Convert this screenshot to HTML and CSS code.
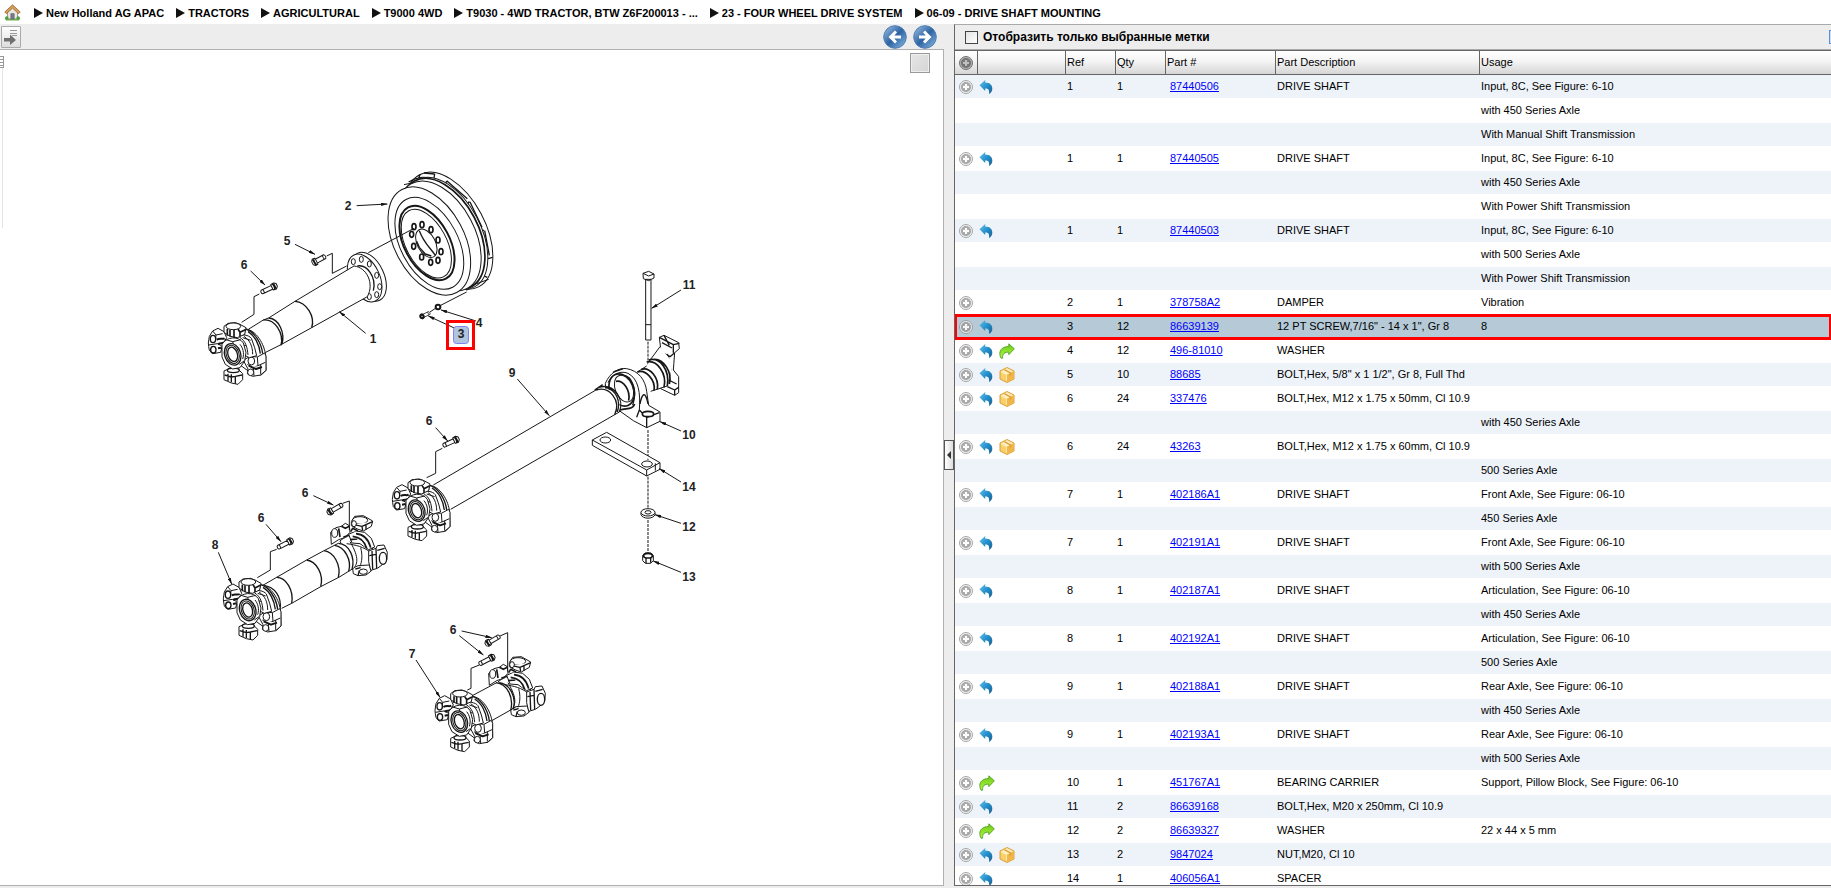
FILE: index.html
```html
<!DOCTYPE html>
<html lang="ru">
<head>
<meta charset="utf-8">
<title>06-09 - DRIVE SHAFT MOUNTING</title>
<link rel="stylesheet" href="styles.css">
</head>
<body>
<svg class="sprite" aria-hidden="true">
  <defs>
    <radialGradient id="g-plus" cx=".5" cy=".45" r=".6"><stop offset="0" stop-color="#b4b4b4"/><stop offset="1" stop-color="#8c8c8c"/></radialGradient>
    <linearGradient id="g-blue" x1="0" y1="0" x2="1" y2="1"><stop offset="0" stop-color="#63c3ec"/><stop offset=".5" stop-color="#2590cb"/><stop offset="1" stop-color="#1a5f97"/></linearGradient>
    <linearGradient id="g-green" x1="0" y1="0" x2="0" y2="1"><stop offset="0" stop-color="#6cc81e"/><stop offset=".5" stop-color="#8fe02c"/><stop offset="1" stop-color="#b6f060"/></linearGradient>
    <linearGradient id="g-ball" x1="0" y1="0" x2="1" y2="1"><stop offset="0" stop-color="#a5c5e5"/><stop offset=".5" stop-color="#2e64a4"/><stop offset="1" stop-color="#8fbde4"/></linearGradient>
    <symbol id="i-plus" viewBox="0 0 14 14"><circle cx="7" cy="7" r="6.5" fill="#f0f0f0" stroke="#999"/><circle cx="7" cy="7" r="5" fill="url(#g-plus)"/><path d="M7 4v6M4 7h6" stroke="#fff" stroke-width="2"/></symbol>
    <symbol id="i-back" viewBox="0 0 14 14"><path d="M0.500 5.200 6.200 0v2.600c4.800 0 7.400 2.800 7.100 6.600-.1 1.800-1 3.200-3.300 4.800.6-3.600-.4-5.400-3.800-5.400v2.400Z" fill="url(#g-blue)"/></symbol>
    <symbol id="i-fwd" viewBox="0 0 16 16"><path d="M15.300 5.800 9.800.8v2.700C4 3.500.8 6.500.8 10.500c0 1.600.3 3 1.200 4.700h1.600c-.3-4.400 2-6.200 6.200-6v2.500Z" fill="url(#g-green)" stroke="#3f9a10" stroke-width=".8"/></symbol>
    <symbol id="i-box" viewBox="0 0 16 16"><path d="m8 .5 7 3.500v8l-7 3.500L1 12V4Z" fill="#f8cf6a" stroke="#d8962a" stroke-width=".9"/><path d="m8 1.300 6.200 3.100L8 7.700 1.800 4.400Z" fill="#fdf0c4"/><path d="M8 7.700 14.200 4.400v7.200L8 14.700Z" fill="#f0b64a"/><path d="m4.500 3 6.200 3.200v2.700l1.600-1V5.400L6 2.200Z" fill="#e0a035"/><path d="M2.200 5.300 7.500 8v5.800" fill="none" stroke="#fff0b8" stroke-width=".7"/></symbol>
  </defs>
</svg>

<nav class="crumbs" aria-label="Breadcrumb">
  <a class="home" href="#" aria-label="Home"><svg width="17" height="17" viewBox="0 0 17 17"><path d="M1 14.500h15l-1 2H2Z" fill="#66b84d"/><path d="M3.500 7.500 8.500 3l5 4.500V15h-10Z" fill="#e9e6e0" stroke="#8a8478" stroke-width=".8"/><path d="M8.500.8.800 8l1.600 1.700 6.100-5.600 6.100 5.600L16.200 8Z" fill="#d9a05a" stroke="#93612c" stroke-width=".8"/><path d="M6.800 15V9.600h3.400V15Z" fill="#777c88" stroke="#555" stroke-width=".5"/><circle cx="2.800" cy="14" r="1.800" fill="#4da03c"/><circle cx="14.200" cy="14" r="1.800" fill="#4da03c"/></svg></a>
  <ol>
    <li><a href="#">New Holland AG APAC</a></li>
    <li><a href="#">TRACTORS</a></li>
    <li><a href="#">AGRICULTURAL</a></li>
    <li><a href="#">T9000 4WD</a></li>
    <li><a href="#">T9030 - 4WD TRACTOR, BTW Z6F200013 - ...</a></li>
    <li><a href="#">23 - FOUR WHEEL DRIVE SYSTEM</a></li>
    <li><a href="#">06-09 - DRIVE SHAFT MOUNTING</a></li>
  </ol>
</nav>

<main class="workspace">
  <section class="figure-pane">
    <div class="toolbar">
      <button class="page-btn" aria-label="Open list"><svg width="18" height="20" viewBox="0 0 18 20"><path d="M8 3.500h7M8 6.500h7M10 8.500h5" stroke="#999"/><path d="M2 11h6V7.500l6 5.500-6 5v-3.500H2Z" fill="#707070"/></svg></button>
      <div class="pager">
        <button aria-label="Previous"><svg width="24" height="24" viewBox="0 0 24 24"><circle cx="12" cy="12" r="11.300" fill="url(#g-ball)" stroke="#4f7fb5"/><path d="M5.500 12 12 5.500l2 2L11.300 10.500H18v3h-6.700L14 16.500l-2 2Z" fill="#fff"/></svg></button>
        <button aria-label="Next"><svg width="24" height="24" viewBox="0 0 24 24"><circle cx="12" cy="12" r="11.300" fill="url(#g-ball)" stroke="#4f7fb5"/><path d="M18.500 12 12 5.500l-2 2 2.700 3H6v3h6.700L10 16.500l2 2Z" fill="#fff"/></svg></button>
      </div>
    </div>
    <div class="canvas">
      <button class="thumb-btn" aria-label="Thumbnail"></button>
      <button class="side-tab" aria-label="Panel"></button>
      <svg class="drawing" width="942" height="835" viewBox="0 50 942 835" role="img" aria-label="Drive shaft mounting">
        <defs>
          <marker id="tip" viewBox="0 0 16 8" refX="15" refY="4" markerWidth="20" markerHeight="10" orient="auto" markerUnits="userSpaceOnUse"><path d="M0 0 16 4 0 8Z" fill="#111" stroke="none"/></marker>
          <g id="bolt"><path d="M0-6h34V6H0C-4 4-4-4 0-6Z"/><path d="M6-6v12M33-9l10-1 6 5v9l-6 6-10-1Z"/><path d="M37-10c4 5 4 15 0 20M42-9l1 18" stroke-width="4"/></g>
          <g id="yoke">
            <path d="M38-76C70-74 96-30 99 5L100 48 86 62 60 60 20 30Z"/>
            <path d="M38-76C64-70 86-36 90-2M46-68C66-56 80-30 83-2" stroke-width="4"/>
            <path d="M32 18 52 6 74 8 96-4 100 5V48L84 62 60 66 44 58 46 44Z"/>
            <path d="M74 8 76 34 60 40 44 30M76 34 98 24M62 40 64 64M84 30V60"/>
            <ellipse cx="56" cy="20" rx="10" ry="12"/><ellipse cx="54" cy="54" rx="9" ry="10"/><path d="M48 34 70 44 88 38" stroke-width="6"/>
            <path d="M5-55C30-62 48-58 56-48L66-20 72 4 50 10 30 0Z"/>
            <path d="M20-52C40-40 44-20 46 2M34-54C52-42 60-24 60 0M18-30 40-26M30-50 54-42"/>
            <path d="M-60-70-44-78-26-68-18-50-30-30-36-6-60-2-70-12-72-24-73-34-70-54Z"/>
            <path d="M-60-70-50-58-30-62M-50-58-52-40M-72-28-46-32-34-26"/>
            <ellipse cx="-59" cy="-46" rx="8" ry="11" stroke-width="4"/><ellipse cx="-58" cy="-14" rx="8" ry="10" stroke-width="4"/><path d="M-48-44C-38-50-30-44-24-48M-44-30C-36-36-32-30-26-36M-44-18-34-20" stroke-width="6"/>
            <path d="M-26-84-14-93 8-95 22-90 40-80 36-60 14-50-8-54-26-66Z"/>
            <ellipse cx="2" cy="-84" rx="22" ry="10"/><path d="M-16-76V-56M-8-74V-54M4-74V-50M16-76 22-66 38-74M22-66V-54" stroke-width="5"/>
            <path d="M-26 50-8 42 16 44 30 58V76L16 90-4 86-26 76Z"/>
            <ellipse cx="2" cy="48" rx="18" ry="7" stroke-width="4"/><path d="M-14 58V80M-4 60V84M8 66V88M8 66 28 62M-24 62-4 68 8 66" stroke-width="4"/>
            <path d="M-32-30C-18-54 18-56 32-34L40-6 36 20 22 40 0 44-22 30-32 8Z"/>
            <path d="M-20-44 0-38 24-44M22-30C30-20 36-4 30 14M0-38 2-30M20 30 34 20"/>
            <ellipse rx="24" ry="33" transform="rotate(-18)" stroke-width="4"/><ellipse rx="19" ry="28" transform="rotate(-18)"/><ellipse rx="14" ry="22" transform="rotate(-18)" stroke-width="4"/>
          </g>
          <g id="yoke-back">
            <path d="M30 78C60 50 100 60 128 96L120 160 104 178 84 172 60 152Z"/>
            <path d="M70 176 84 182 108 180 124 168 118 150 84 152 68 160Z"/><ellipse cx="100" cy="170" rx="12" ry="8"/><path d="M76 162 92 158M84 182 88 166" stroke-width="4"/>
            <path d="M4 88 2 52 18 38 34 34 46 25 58 32 60 52 44 68 26 74Z"/>
            <ellipse cx="14" cy="54" rx="9" ry="13"/><path d="M26 40 30 66M34 34 46 40 58 34M40 66 62 60 80 66" stroke-width="5"/>
            <path d="M56 58 78 48 104 52 124 70 134 96 116 104 90 86 66 84Z"/>
            <path d="M68 64C90 66 104 80 110 100M78 56C100 58 116 74 122 98M60 74 82 72M62 50 68 40 84 48" stroke-width="5"/>
            <path d="M50 86C80 90 100 96 122 112M60 80C90 130 82 150 68 162M92 98C98 120 96 140 90 154"/>
            <path d="M64 20 74 4 100 2 128 18 124 34 100 48 82 42 64 32Z"/>
            <ellipse cx="90" cy="16" rx="23" ry="11"/><path d="M68 28 96 34 128 20M96 34 98 46M108 30V44" stroke-width="4"/><ellipse cx="72" cy="26" rx="7" ry="9"/>
            <path d="M116 108 138 100 142 92 162 90 172 112 170 136 156 150 142 160 122 166 116 140Z"/>
            <ellipse cx="159" cy="130" rx="11" ry="18" stroke-width="4"/><path d="M138 100 140 160M126 108 128 162M142 106 164 100M118 122 138 118" stroke-width="4"/>
          </g>
        </defs>

        <!-- Front shaft with damper -->
        <g class="ink" transform="translate(200 160) scale(.33333)">
          <ellipse cx="748" cy="212" rx="108" ry="190" transform="rotate(-28 748 212)"/>
          <path d="M672 39 704 42M704 42 702 54M740 64 734 74M740 62 802 116M808 124 802 134M810 126 846 202M852 210 842 216M854 212 868 286M878 292 864 296M862 352 848 346M626 66C650 50 670 50 700 56M660 44 656 54" stroke-width="4"/>
          <ellipse cx="738" cy="220" rx="104" ry="182" transform="rotate(-28 738 220)"/>
          <ellipse cx="728" cy="222" rx="107" ry="180" transform="rotate(-28 728 222)" stroke-width="5"/>
          <ellipse cx="718" cy="228" rx="106" ry="178" transform="rotate(-28 718 228)"/>
          <ellipse cx="688" cy="243" rx="105" ry="175" transform="rotate(-28 688 243)"/>
          <path d="M612 74 640 68M800 392 816 376 866 358"/>
          <ellipse cx="688" cy="250" rx="86" ry="149" transform="rotate(-28 688 250)"/>
          <ellipse cx="681" cy="249" rx="68" ry="121" transform="rotate(-28 681 249)" stroke-width="6"/>
          <ellipse cx="679" cy="251" rx="61" ry="112" transform="rotate(-28 679 251)"/>
          <ellipse cx="679" cy="250" rx="27" ry="46" transform="rotate(-28 679 250)"/>
          <path d="M658 212C672 250 690 262 706 286M650 244 658 262 676 282 694 288" stroke-width="4"/>
          <g stroke-width="5"><ellipse cx="642" cy="200" rx="6" ry="9"/><ellipse cx="666" cy="194" rx="6" ry="9"/><ellipse cx="693" cy="209" rx="6" ry="9"/><ellipse cx="714" cy="240" rx="6" ry="9"/><ellipse cx="723" cy="275" rx="6" ry="9"/><ellipse cx="714" cy="301" rx="6" ry="9"/><ellipse cx="692" cy="307" rx="6" ry="9"/><ellipse cx="665" cy="291" rx="6" ry="9"/><ellipse cx="641" cy="259" rx="6" ry="9"/><ellipse cx="635" cy="223" rx="6" ry="9"/></g>
          <path d="M642 205 505 278M800 396 722 436M705 446 690 456"/>
          <ellipse cx="506" cy="350" rx="46" ry="78" transform="rotate(-25 506 350)"/>
          <ellipse cx="494" cy="354" rx="45" ry="76" transform="rotate(-25 494 354)"/>
          <g><ellipse cx="460" cy="305" rx="6" ry="9"/><ellipse cx="484" cy="298" rx="6" ry="9"/><ellipse cx="508" cy="312" rx="6" ry="9"/><ellipse cx="530" cy="346" rx="6" ry="9"/><ellipse cx="539" cy="380" rx="6" ry="9"/><ellipse cx="530" cy="404" rx="6" ry="9"/><ellipse cx="508" cy="410" rx="6" ry="9"/></g>
          <path d="M472 318C500 312 530 350 520 392" stroke-width="4"/>
          <path class="clear" d="M145 510 462 318C500 322 524 370 502 410L195 578Z"/>
          <path d="M145 508 190 480 206 474 285 424 462 318C500 322 524 370 502 410L335 503 243 554 195 578"/>
          <path d="M190 480C225 476 252 520 243 556M206 474C238 476 255 520 246 552M285 424C320 426 346 470 335 503" stroke-width="4"/>
          <use href="#yoke" x="98" y="583"/>
          <path d="M178 402 162 410V463L125 487M380 288 397 280V340L440 318"/>
          <use href="#bolt" transform="translate(186 396) rotate(-25)"/>
          <use href="#bolt" transform="translate(374 290) rotate(152) scale(.85 1.1)"/>
          <use href="#bolt" transform="translate(688 459) rotate(155) scale(.6 .8)"/>
          <circle cx="666" cy="469" r="5" stroke-width="6"/>
          <circle cx="714" cy="441" r="7" stroke-width="6"/>
          <g marker-end="url(#tip)"><path d="M470 137 562 132"/><path d="M285 253 345 283"/><path d="M152 333 195 375"/><path d="M497 520 418 455"/><path d="M828 483 723 450"/><path d="M765 505 685 468"/></g>
        </g>

        <!-- Long shaft with bearing carrier -->
        <g class="ink" transform="translate(380 380) scale(.33333)">
          <path d="M804-115V-30M804 150V240M804 290V385M804 420V520" stroke-dasharray="9 3"/>
          <path d="M838-128 852-134 896-112 898-94 884-82 880-30 896-10V38L884 46 842 26 860-20 846-60Z"/>
          <path d="M838-128 880-106 898-110M880-106V-82M846-112 876-96M852-134 868-104M862-78 874-40 866-2M852-80 870-70 884-82M862 20 884 30 896 22M884 30V46M846 14 866 0 890 12" stroke-width="4"/>
          <path class="clear" d="M772-24 800-42 812-60 840-100 880-50 862 16 820 34 800 30Z"/>
          <path d="M772-24 800-42M806-54 840-100M812 34 862 18"/>
          <path d="M806-60C840-70 870-30 862 18M800-54C830-62 862-20 852 22M822-62C850-64 878-24 868 12M772-24C796-34 828 0 822 32M784-32C810-40 838-6 832 28" stroke-width="5"/>
          <path d="M676 10C690-22 716-38 740-34 776-28 796 0 800 34L806 76 840 96V124L800 143 760 122 718 92C690 70 676 40 676 10Z"/>
          <path d="M684 8C694-16 720-30 744-20 776-4 782 40 778 90"/>
          <path d="M690 6C700-12 730-22 748-6 768 20 766 50 758 76M730-34 700-24M778 90 770 112M778 90 800 112 838 98M800 112V143M780 72C786 40 796 30 804 72" stroke-width="4"/>
          <ellipse cx="725" cy="30" rx="36" ry="50" transform="rotate(-22 725 30)" stroke-width="5"/>
          <ellipse cx="732" cy="26" rx="26" ry="42" transform="rotate(-22 732 26)"/>
          <path d="M708 4C730 0 752 30 746 62M720 90C740 84 758 90 764 72" stroke-width="5"/>
          <ellipse cx="804" cy="102" rx="17" ry="8" stroke-width="5"/>
          <path class="clear" d="M160 315 648 30C700 10 726 60 718 98L212 388Z"/>
          <path d="M160 315 648 30M718 96 212 388"/>
          <path d="M648 30C688 18 724 60 704 104M656 22C704 8 734 60 718 96M644 30 668 14M676 22C712 30 722 66 712 96" stroke-width="4"/>
          <use href="#yoke" x="110" y="392"/>
          <path d="M187 205 167 215V280L140 293"/>
          <use href="#bolt" transform="translate(192 196) rotate(-25)"/>
          <path d="M797-302H813V-120H797ZM789-320 806-326 822-318V-306L806-298 790-304ZM789-320 806-312 822-318M797-166H813"/>
          <path d="M637 180 680 157 840 248V268L800 288 637 196ZM637 180 800 270 840 248M800 270V288M826 250V272"/>
          <ellipse cx="676" cy="180" rx="16" ry="9"/><ellipse cx="801" cy="252" rx="16" ry="9"/>
          <path d="M783 398V404C788 418 820 418 825 404V398"/><ellipse cx="804" cy="397" rx="21" ry="11"/><ellipse cx="804" cy="397" rx="9" ry="5"/>
          <path d="M788 526 796 519 812 519 820 526V542L812 550 796 550 788 542Z"/><ellipse cx="804" cy="527" rx="13" ry="7" stroke-width="5"/><path d="M798 534V550M812 534V548" stroke-width="4"/>
          <g marker-end="url(#tip)"><path d="M903-270 815-215"/><path d="M412-3 508 107"/><path d="M903 153 840 125"/><path d="M903 306 838 266"/><path d="M903 430 825 404"/><path d="M903 577 820 543"/><path d="M167 143 203 183"/></g>
        </g>

        <!-- Articulation shaft -->
        <g class="ink" transform="translate(200 480) scale(.33333)">
          <use href="#yoke-back" x="390" y="105"/>
          <path class="clear" d="M185 318 415 190C450 190 468 230 460 265L245 388Z"/>
          <path d="M185 318 230 292 320 240 372 212 415 190M460 265 420 290 362 320 275 370 245 385"/>
          <path d="M230 292C258 292 282 330 275 370M320 240C350 244 372 284 362 320M372 212C402 216 424 256 415 292M415 190C448 192 466 232 456 268M404 196C434 200 456 240 446 274M190 316C224 320 246 350 240 388" stroke-width="4"/>
          <use href="#yoke" x="143" y="390"/>
          <path d="M230 208 211 215V270L172 293M428 70 448 63V150"/>
          <use href="#bolt" transform="translate(235 202) rotate(-27)"/>
          <use href="#bolt" transform="translate(425 75) rotate(150)"/>
          <g marker-end="url(#tip)"><path d="M340 47 400 75"/><path d="M198 133 243 185"/><path d="M55 217 95 312"/></g>
        </g>

        <!-- Short shaft -->
        <g class="ink" transform="translate(390 610) scale(.33333)">
          <use href="#yoke-back" x="294" y="138"/>
          <path class="clear" d="M245 258 320 216C356 220 376 260 366 300L300 335Z"/>
          <path d="M245 258 320 218M300 335 376 292"/>
          <path d="M318 218C352 222 372 262 362 302M328 218C360 222 380 262 370 296" stroke-width="4"/>
          <use href="#yoke" x="208" y="335"/>
          <path d="M268 165 243 175V235L232 240M330 78 353 68V185"/>
          <use href="#bolt" transform="translate(270 161) rotate(-27)"/>
          <use href="#bolt" transform="translate(327 80) rotate(150) scale(.95 1)"/>
          <g marker-end="url(#tip)"><path d="M215 63 305 83"/><path d="M208 77 280 135"/><path d="M78 150 150 262"/></g>
        </g>

        <rect class="hot" x="453.500" y="326.500" width="15" height="17" rx="3"/>
        <g class="callouts">
          <text x="348" y="210">2</text><text x="287" y="245">5</text><text x="244" y="269">6</text><text x="373" y="343">1</text><text x="479" y="327">4</text><text x="461" y="338">3</text>
          <text x="689" y="289">11</text><text x="512" y="377">9</text><text x="429" y="425">6</text><text x="689" y="439">10</text><text x="689" y="491">14</text><text x="689" y="531">12</text><text x="689" y="581">13</text>
          <text x="305" y="497">6</text><text x="261" y="522">6</text><text x="215" y="549">8</text><text x="453" y="634">6</text><text x="412" y="658">7</text>
        </g>
        <rect class="mark" x="447.500" y="321.500" width="26" height="27"/>
      </svg>
    </div>
  </section>

  <div class="splitter"><button aria-label="Collapse"><svg width="4" height="8" viewBox="0 0 4 8"><path d="M4 0v8L0 4Z" fill="#333"/></svg></button></div>

  <section class="parts-pane">
    <div class="filter">
      <label><input type="checkbox">Отобразить только выбранные метки</label>
      <button class="edge-btn" aria-label="Options"></button>
    </div>
    <div class="grid-wrap">
      <table>
        <colgroup><col class="c-add"><col class="c-icons"><col class="c-ref"><col class="c-qty"><col class="c-part"><col class="c-desc"><col></colgroup>
        <thead><tr><th><button aria-label="Add all"><svg class="plus dark"><use href="#i-plus"/></svg></button></th><th></th><th>Ref</th><th>Qty</th><th>Part #</th><th>Part Description</th><th>Usage</th></tr></thead>
        <tbody>
          <tr><td><button aria-label="Add"><svg class="plus"><use href="#i-plus"/></svg></button></td><td><svg class="back"><use href="#i-back"/></svg></td><td>1</td><td>1</td><td><a href="#">87440506</a></td><td>DRIVE SHAFT</td><td>Input, 8C, See Figure: 6-10</td></tr>
          <tr><td></td><td></td><td></td><td></td><td></td><td></td><td>with 450 Series Axle</td></tr>
          <tr><td></td><td></td><td></td><td></td><td></td><td></td><td>With Manual Shift Transmission</td></tr>
          <tr><td><button aria-label="Add"><svg class="plus"><use href="#i-plus"/></svg></button></td><td><svg class="back"><use href="#i-back"/></svg></td><td>1</td><td>1</td><td><a href="#">87440505</a></td><td>DRIVE SHAFT</td><td>Input, 8C, See Figure: 6-10</td></tr>
          <tr><td></td><td></td><td></td><td></td><td></td><td></td><td>with 450 Series Axle</td></tr>
          <tr><td></td><td></td><td></td><td></td><td></td><td></td><td>With Power Shift Transmission</td></tr>
          <tr><td><button aria-label="Add"><svg class="plus"><use href="#i-plus"/></svg></button></td><td><svg class="back"><use href="#i-back"/></svg></td><td>1</td><td>1</td><td><a href="#">87440503</a></td><td>DRIVE SHAFT</td><td>Input, 8C, See Figure: 6-10</td></tr>
          <tr><td></td><td></td><td></td><td></td><td></td><td></td><td>with 500 Series Axle</td></tr>
          <tr><td></td><td></td><td></td><td></td><td></td><td></td><td>With Power Shift Transmission</td></tr>
          <tr><td><button aria-label="Add"><svg class="plus"><use href="#i-plus"/></svg></button></td><td></td><td>2</td><td>1</td><td><a href="#">378758A2</a></td><td>DAMPER</td><td>Vibration</td></tr>
          <tr class="selected"><td><button aria-label="Add"><svg class="plus"><use href="#i-plus"/></svg></button></td><td><svg class="back"><use href="#i-back"/></svg></td><td>3</td><td>12</td><td><a href="#">86639139</a></td><td>12 PT SCREW,7/16" - 14 x 1", Gr 8</td><td>8</td></tr>
          <tr><td><button aria-label="Add"><svg class="plus"><use href="#i-plus"/></svg></button></td><td><svg class="back"><use href="#i-back"/></svg><svg class="fwd"><use href="#i-fwd"/></svg></td><td>4</td><td>12</td><td><a href="#">496-81010</a></td><td>WASHER</td><td></td></tr>
          <tr><td><button aria-label="Add"><svg class="plus"><use href="#i-plus"/></svg></button></td><td><svg class="back"><use href="#i-back"/></svg><svg class="box"><use href="#i-box"/></svg></td><td>5</td><td>10</td><td><a href="#">88685</a></td><td>BOLT,Hex, 5/8" x 1 1/2", Gr 8, Full Thd</td><td></td></tr>
          <tr><td><button aria-label="Add"><svg class="plus"><use href="#i-plus"/></svg></button></td><td><svg class="back"><use href="#i-back"/></svg><svg class="box"><use href="#i-box"/></svg></td><td>6</td><td>24</td><td><a href="#">337476</a></td><td>BOLT,Hex, M12 x 1.75 x 50mm, Cl 10.9</td><td></td></tr>
          <tr><td></td><td></td><td></td><td></td><td></td><td></td><td>with 450 Series Axle</td></tr>
          <tr><td><button aria-label="Add"><svg class="plus"><use href="#i-plus"/></svg></button></td><td><svg class="back"><use href="#i-back"/></svg><svg class="box"><use href="#i-box"/></svg></td><td>6</td><td>24</td><td><a href="#">43263</a></td><td>BOLT,Hex, M12 x 1.75 x 60mm, Cl 10.9</td><td></td></tr>
          <tr><td></td><td></td><td></td><td></td><td></td><td></td><td>500 Series Axle</td></tr>
          <tr><td><button aria-label="Add"><svg class="plus"><use href="#i-plus"/></svg></button></td><td><svg class="back"><use href="#i-back"/></svg></td><td>7</td><td>1</td><td><a href="#">402186A1</a></td><td>DRIVE SHAFT</td><td>Front Axle, See Figure: 06-10</td></tr>
          <tr><td></td><td></td><td></td><td></td><td></td><td></td><td>450 Series Axle</td></tr>
          <tr><td><button aria-label="Add"><svg class="plus"><use href="#i-plus"/></svg></button></td><td><svg class="back"><use href="#i-back"/></svg></td><td>7</td><td>1</td><td><a href="#">402191A1</a></td><td>DRIVE SHAFT</td><td>Front Axle, See Figure: 06-10</td></tr>
          <tr><td></td><td></td><td></td><td></td><td></td><td></td><td>with 500 Series Axle</td></tr>
          <tr><td><button aria-label="Add"><svg class="plus"><use href="#i-plus"/></svg></button></td><td><svg class="back"><use href="#i-back"/></svg></td><td>8</td><td>1</td><td><a href="#">402187A1</a></td><td>DRIVE SHAFT</td><td>Articulation, See Figure: 06-10</td></tr>
          <tr><td></td><td></td><td></td><td></td><td></td><td></td><td>with 450 Series Axle</td></tr>
          <tr><td><button aria-label="Add"><svg class="plus"><use href="#i-plus"/></svg></button></td><td><svg class="back"><use href="#i-back"/></svg></td><td>8</td><td>1</td><td><a href="#">402192A1</a></td><td>DRIVE SHAFT</td><td>Articulation, See Figure: 06-10</td></tr>
          <tr><td></td><td></td><td></td><td></td><td></td><td></td><td>500 Series Axle</td></tr>
          <tr><td><button aria-label="Add"><svg class="plus"><use href="#i-plus"/></svg></button></td><td><svg class="back"><use href="#i-back"/></svg></td><td>9</td><td>1</td><td><a href="#">402188A1</a></td><td>DRIVE SHAFT</td><td>Rear Axle, See Figure: 06-10</td></tr>
          <tr><td></td><td></td><td></td><td></td><td></td><td></td><td>with 450 Series Axle</td></tr>
          <tr><td><button aria-label="Add"><svg class="plus"><use href="#i-plus"/></svg></button></td><td><svg class="back"><use href="#i-back"/></svg></td><td>9</td><td>1</td><td><a href="#">402193A1</a></td><td>DRIVE SHAFT</td><td>Rear Axle, See Figure: 06-10</td></tr>
          <tr><td></td><td></td><td></td><td></td><td></td><td></td><td>with 500 Series Axle</td></tr>
          <tr><td><button aria-label="Add"><svg class="plus"><use href="#i-plus"/></svg></button></td><td><svg class="fwd"><use href="#i-fwd"/></svg></td><td>10</td><td>1</td><td><a href="#">451767A1</a></td><td>BEARING CARRIER</td><td>Support, Pillow Block, See Figure: 06-10</td></tr>
          <tr><td><button aria-label="Add"><svg class="plus"><use href="#i-plus"/></svg></button></td><td><svg class="back"><use href="#i-back"/></svg></td><td>11</td><td>2</td><td><a href="#">86639168</a></td><td>BOLT,Hex, M20 x 250mm, Cl 10.9</td><td></td></tr>
          <tr><td><button aria-label="Add"><svg class="plus"><use href="#i-plus"/></svg></button></td><td><svg class="fwd"><use href="#i-fwd"/></svg></td><td>12</td><td>2</td><td><a href="#">86639327</a></td><td>WASHER</td><td>22 x 44 x 5 mm</td></tr>
          <tr><td><button aria-label="Add"><svg class="plus"><use href="#i-plus"/></svg></button></td><td><svg class="back"><use href="#i-back"/></svg><svg class="box"><use href="#i-box"/></svg></td><td>13</td><td>2</td><td><a href="#">9847024</a></td><td>NUT,M20, Cl 10</td><td></td></tr>
          <tr><td><button aria-label="Add"><svg class="plus"><use href="#i-plus"/></svg></button></td><td><svg class="back"><use href="#i-back"/></svg></td><td>14</td><td>1</td><td><a href="#">406056A1</a></td><td>SPACER</td><td></td></tr>
        </tbody>
      </table>
    </div>
  </section>
</main>
</body>
</html>
```

FILE: styles.css
```css
* { box-sizing: border-box; }

body {
  margin: 0;
  height: 100vh;
  display: flex;
  flex-direction: column;
  overflow: hidden;
  background: #ededed;
  color: #000;
  font: 11px/16px "Liberation Sans", Arial, sans-serif;
}

button {
  display: block;
  margin: 0;
  padding: 0;
  border: 0;
  background: none;
}

svg { display: block; }

.sprite {
  position: absolute;
  width: 0;
  height: 0;
}

/* Breadcrumb */
.crumbs {
  flex: none;
  display: flex;
  align-items: center;
  height: 24px;
  padding: 1px 0 0 4px;
  background: #fff;
  font-weight: bold;
}

.crumbs ol {
  display: flex;
  gap: 12px;
  margin: 0 0 0 13px;
  padding: 0;
  list-style: none;
}

.crumbs li {
  display: flex;
  align-items: center;
  gap: 3px;
  white-space: nowrap;
}

.crumbs li::before {
  content: "";
  border: 5px solid transparent;
  border-width: 5px 0 5px 9px;
  border-left-color: #111;
}

.crumbs a {
  color: #000;
  text-decoration: none;
}

/* Panes */
.workspace {
  flex: 1;
  min-height: 0;
  display: grid;
  grid-template-columns: 944fr 10px 877fr;
  padding-bottom: 2px;
}

.figure-pane,
.parts-pane {
  display: flex;
  flex-direction: column;
  min-width: 0;
  min-height: 0;
}

.toolbar {
  flex: none;
  display: flex;
  justify-content: space-between;
  align-items: center;
  height: 25px;
  padding: 1px 7px 0 1px;
}

.page-btn {
  border: 1px solid #aaa;
  border-radius: 1px;
  background: linear-gradient(#fff, #ddd);
}

.pager {
  display: flex;
  gap: 6px;
}

.canvas {
  position: relative;
  flex: 1;
  min-height: 0;
  overflow: hidden;
  border: 1px solid #b0b0b0;
  border-left: 0;
  background: #fff;
}

.thumb-btn {
  position: absolute;
  top: 3px;
  right: 13px;
  width: 20px;
  height: 20px;
  border: 1px solid #999;
  background: linear-gradient(135deg, #e6e6e6, #d4d4d4);
  box-shadow: inset 0 0 0 1px #eee;
}

.side-tab {
  position: absolute;
  top: 6px;
  left: 0;
  width: 4px;
  height: 12px;
  border: 1px solid #999;
  border-left: 0;
  background: repeating-linear-gradient(#fff 0 2px, #999 2px 3px);
}

.side-tab::after {
  content: "";
  position: absolute;
  top: 11px;
  left: 2px;
  width: 1px;
  height: 160px;
  background: #e4e4e4;
}

/* Drawing */
.ink {
  fill: #fff;
  stroke: #161616;
  stroke-width: 3;
  stroke-linejoin: round;
}

.ink path:not([d*="Z"]) { fill: none; }

.ink .clear { stroke: none; }

.callouts {
  fill: #222;
  font-size: 12px;
  font-weight: bold;
  text-anchor: middle;
}

.hot {
  fill: #b0c4de;
  stroke: #8080f0;
}

.mark {
  fill: none;
  stroke: #f00;
  stroke-width: 3;
}

/* Splitter */
.splitter {
  display: flex;
  align-items: center;
}

.splitter button {
  display: flex;
  align-items: center;
  justify-content: center;
  width: 10px;
  height: 30px;
  border: 1px solid #555;
  background: linear-gradient(90deg, #fff, #ddd);
}

/* Parts list */
.parts-pane {
  border: 1px solid #666;
  border-width: 1px 0 1px 1px;
  border-top-color: #aaa;
}

.filter {
  flex: none;
  display: flex;
  justify-content: space-between;
  align-items: center;
  height: 25px;
  padding-left: 10px;
  border-bottom: 1px solid #aaa;
}

.filter label {
  display: flex;
  align-items: center;
  gap: 5px;
  font-size: 12px;
  font-weight: bold;
}

.filter input {
  appearance: none;
  width: 13px;
  height: 13px;
  margin: 0;
  border: 1px solid #444;
  background: linear-gradient(135deg, #e4e4e4, #fff);
}

.edge-btn {
  width: 2px;
  height: 14px;
  border: 1px solid #5b8fcb;
  border-right: 0;
  background: #cfe2f7;
}

.grid-wrap {
  flex: 1;
  min-height: 0;
  overflow: hidden;
  background: #fff;
}

table {
  width: 100%;
  table-layout: fixed;
  border-collapse: separate;
  border-spacing: 0;
}

.c-add { width: 23px; }
.c-icons { width: 88px; }
.c-ref,
.c-qty { width: 50px; }
.c-part { width: 110px; }
.c-desc { width: 204px; }

th {
  height: 25px;
  padding: 0 1px 2px;
  border: 1px solid #666;
  border-left: 0;
  background: linear-gradient(#fff, #f4f4f4 45%, #d6d6d6);
  font-weight: normal;
  text-align: left;
  white-space: nowrap;
}

th:last-child { border-right: 0; }

td {
  height: 24px;
  padding: 0 1px 1px;
  border-bottom: 1px solid #fff;
  white-space: nowrap;
}

th:first-child,
td:first-child {
  padding: 0 0 0 4px;
}

td:nth-child(5) { padding-left: 4px; }

tbody tr:nth-child(odd) { background: #eef3fa; }

tbody tr.selected {
  background: #b5c9d7;
  outline: 3px solid #f00;
  outline-offset: -2px;
}

.selected td { border-bottom-color: #b5c9d7; }

td a {
  color: #00f;
  text-decoration: underline;
}

td svg {
  display: inline-block;
  vertical-align: middle;
}

.plus {
  width: 14px;
  height: 14px;
}

.plus.dark { filter: brightness(.75); }

td .plus,
th .plus { display: block; }

td .plus { opacity: .85; }

.back {
  width: 14px;
  height: 14px;
  margin-right: 6px;
}

.fwd,
.box {
  width: 16px;
  height: 16px;
}
```
